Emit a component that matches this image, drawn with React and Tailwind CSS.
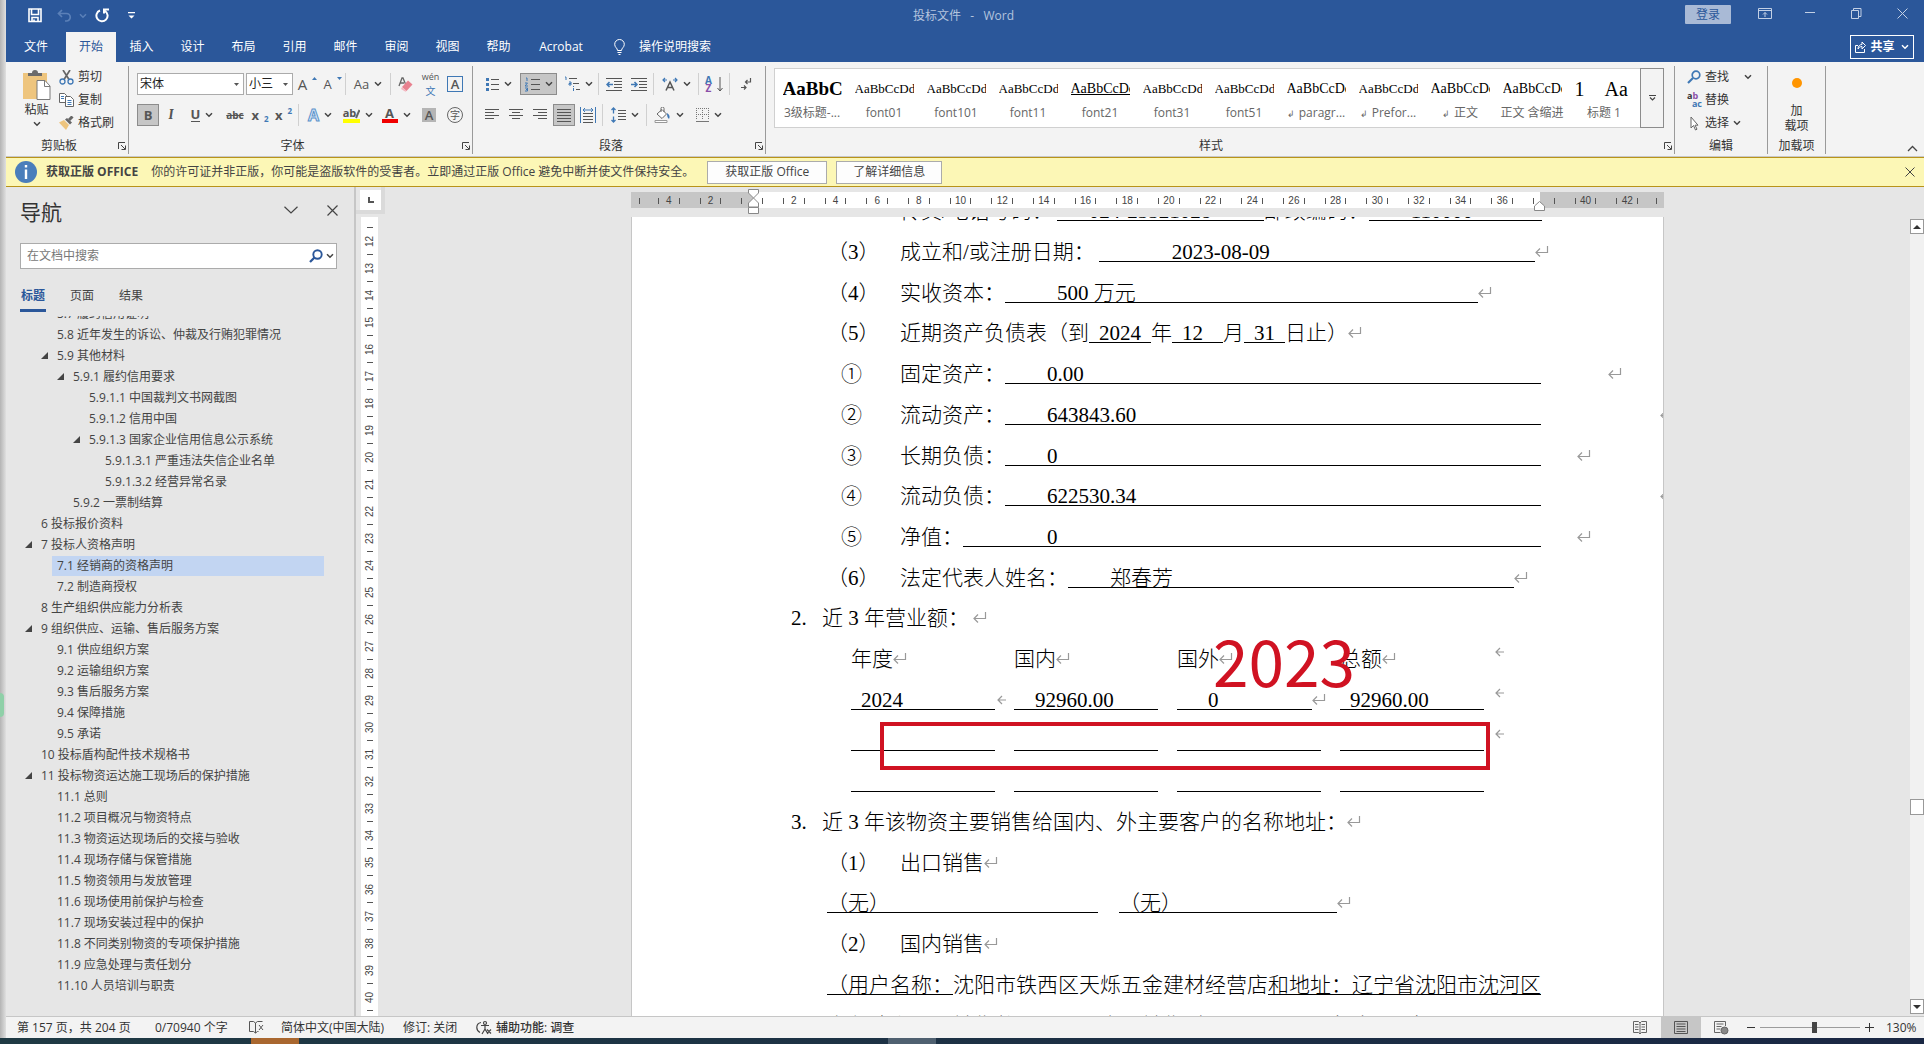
import { clsx } from "clsx";

const styleItems = [
  { preview: "AaBbC", name: "3级标题-...", look: "text-[19px] font-bold" },
  { preview: "AaBbCcDdE", name: "font01", look: "text-[13px]" },
  { preview: "AaBbCcDdE", name: "font101", look: "text-[13px]" },
  { preview: "AaBbCcDdE", name: "font11", look: "text-[13px]" },
  { preview: "AaBbCcDdE", name: "font21", look: "text-[14px] underline" },
  { preview: "AaBbCcDdE", name: "font31", look: "text-[13px]" },
  { preview: "AaBbCcDdE", name: "font51", look: "text-[13px]" },
  { preview: "AaBbCcDdE", name: "paragr...", look: "text-[14px]", para: true },
  { preview: "AaBbCcDdE", name: "Prefor...", look: "text-[13px]", para: true },
  { preview: "AaBbCcDd", name: "正文", look: "text-[14px]", para: true },
  { preview: "AaBbCcDdE", name: "正文 含缩进", look: "text-[14px]" },
  { preview: "1\u00a0\u00a0\u00a0\u00a0Aa", name: "标题 1", look: "text-[20px]" },
];

const tabs = ["插入", "设计", "布局", "引用", "邮件", "审阅", "视图", "帮助"];

const outline = [
  { level: 2, text: "5.7 履约信用证明" },
  { level: 2, text: "5.8 近年发生的诉讼、仲裁及行贿犯罪情况" },
  { level: 2, text: "5.9 其他材料", open: true },
  { level: 3, text: "5.9.1 履约信用要求", open: true },
  { level: 4, text: "5.9.1.1 中国裁判文书网截图" },
  { level: 4, text: "5.9.1.2 信用中国" },
  { level: 4, text: "5.9.1.3 国家企业信用信息公示系统", open: true },
  { level: 5, text: "5.9.1.3.1 严重违法失信企业名单" },
  { level: 5, text: "5.9.1.3.2 经营异常名录" },
  { level: 3, text: "5.9.2 一票制结算" },
  { level: 1, text: "6 投标报价资料" },
  { level: 1, text: "7 投标人资格声明", open: true },
  { level: 2, text: "7.1 经销商的资格声明", current: true },
  { level: 2, text: "7.2 制造商授权" },
  { level: 1, text: "8 生产组织供应能力分析表" },
  { level: 1, text: "9 组织供应、运输、售后服务方案", open: true },
  { level: 2, text: "9.1 供应组织方案" },
  { level: 2, text: "9.2 运输组织方案" },
  { level: 2, text: "9.3 售后服务方案" },
  { level: 2, text: "9.4 保障措施" },
  { level: 2, text: "9.5 承诺" },
  { level: 1, text: "10 投标盾构配件技术规格书" },
  { level: 1, text: "11 投标物资运达施工现场后的保护措施", open: true },
  { level: 2, text: "11.1 总则" },
  { level: 2, text: "11.2 项目概况与物资特点" },
  { level: 2, text: "11.3 物资运达现场后的交接与验收" },
  { level: 2, text: "11.4 现场存储与保管措施" },
  { level: 2, text: "11.5 物资领用与发放管理" },
  { level: 2, text: "11.6 现场使用前保护与检查" },
  { level: 2, text: "11.7 现场安装过程中的保护" },
  { level: 2, text: "11.8 不同类别物资的专项保护措施" },
  { level: 2, text: "11.9 应急处理与责任划分" },
  { level: 2, text: "11.10 人员培训与职责" },
];

const indent = {
  1: "pl-[19px]",
  2: "pl-[35px]",
  3: "pl-[51px]",
  4: "pl-[67px]",
  5: "pl-[83px]",
};

/* ---------- small shared pieces ---------- */

const Chevron = ({ className = "text-[#444]" }) => (
  <svg width="8" height="6" viewBox="0 0 8 6" className={clsx("shrink-0", className)}>
    <path d="M1 1.2 4 4.2 7 1.2" fill="none" stroke="currentColor" strokeWidth="1.5" />
  </svg>
);

const Tool = ({ label, className, active, drop, children }) => (
  <button
    type="button"
    aria-label={label}
    className={clsx(
      "flex h-[22px] shrink-0 items-center justify-center gap-[5px] leading-none text-[#555]",
      active && "border border-[#8c8c8c] bg-[#c6c6c6]",
      className
    )}
  >
    {children}
    {drop && <Chevron />}
  </button>
);

const Sep = () => (
  <span className="flex h-[22px] w-[5px] shrink-0 justify-center">
    <span className="w-px bg-[#d0d0d0]" />
  </span>
);

const Launcher = ({ label }) => (
  <button type="button" aria-label={label} className="absolute right-[2px] bottom-[4px]">
    <svg width="8" height="8" viewBox="0 0 8 8" fill="none" stroke="#444">
      <path d="M.5 7V.5H7M3 3l4 4M7.5 3.5v4h-4" />
    </svg>
  </button>
);

const Group = ({ name, className, launcher, children }) => (
  <section
    aria-label={name}
    className={clsx("relative mt-1 flex h-[88px] flex-col border-r border-[#9a9a9a]", className)}
  >
    {children}
    <p className={clsx("mt-auto h-[16px] text-center leading-[16px] text-[#333]", launcher && "pr-4")}>{name}</p>
    {launcher && <Launcher label={`${name}设置`} />}
  </section>
);

// horizontal bars used by the alignment buttons
const Lines = ({ rows, color = "#555" }) => (
  <svg width="15" height="13" viewBox="0 0 15 13" stroke={color}>
    {rows.map(([from, to], i) => (
      <path key={i} d={`M${from} ${i * 3 + 0.5}H${to}`} />
    ))}
  </svg>
);

/* ---------- title bar and tabs ---------- */

const TitleBar = () => (
  <header className="flex h-[31px] shrink-0 items-center justify-between">
    <div className="flex w-[300px] items-center pl-[22px]">
      <button type="button" aria-label="保存">
        <svg width="14" height="15" viewBox="0 0 14 15" fill="none" stroke="#fff" strokeWidth="1.6">
          <path d="M1 1h12v12.500H1zM3.500 1v5.500h7V1M4 13.500V9.500h6v4M6 11.500v2" />
        </svg>
      </button>
      <button type="button" aria-label="撤消" className="ml-[15px] flex items-center gap-[7px] text-[#5b80b8]">
        <svg width="15" height="13" viewBox="0 0 15 13" fill="none" stroke="currentColor" strokeWidth="1.7">
          <path d="M5 1 1.500 4.500 5 8M2 4.500h7.500a3.500 3.500 0 0 1 0 7.500H8" />
        </svg>
        <Chevron className="text-[#5b80b8]" />
      </button>
      <button type="button" aria-label="恢复" className="ml-[8px]">
        <svg width="15" height="15" viewBox="0 0 15 15" fill="none" stroke="#fff" strokeWidth="2">
          <path d="M5 2.500A5.600 5.600 0 1 0 10 3M9 .500v5M8.500 1.500H14" />
        </svg>
      </button>
      <button type="button" aria-label="自定义快速访问工具栏" className="ml-[18px]">
        <svg width="7" height="7" viewBox="0 0 7 7" fill="#fff">
          <path d="M0 0h7v1.300H0zM.5 3.500h6l-3 3z" />
        </svg>
      </button>
    </div>
    <h1 className="pr-[64px] text-[12px] text-[#b4c4de]">投标文件&nbsp;&nbsp; -&nbsp;&nbsp; Word</h1>
    <div className="flex h-full items-start pt-[5px] text-[#c3d0e5]">
      <button type="button" className="mr-[27px] h-[19px] w-[46px] rounded-[1px] bg-[#a9bad6] text-[12px] leading-[19px] text-[#2b579a]">
        登录
      </button>
      <button type="button" aria-label="功能区显示选项" className="mr-[33px] pt-[3px]">
        <svg width="14" height="11" viewBox="0 0 14 11" fill="none" stroke="currentColor">
          <path d="M.5.5h13v10H.5zM.5 2.500h13M7 9V4.500M5 6.500l2-2 2 2" />
        </svg>
      </button>
      <button type="button" aria-label="最小化" className="mr-[36px] pt-[7px]">
        <svg width="10" height="2" viewBox="0 0 10 2"><path d="M0 .5h10" stroke="currentColor" /></svg>
      </button>
      <button type="button" aria-label="还原" className="mr-[35px] pt-[3px]">
        <svg width="11" height="11" viewBox="0 0 11 11" fill="none" stroke="currentColor">
          <path d="M.5 2.500h7v8h-7zM2.500 2.500v-2h7.500v8H8" />
        </svg>
      </button>
      <button type="button" aria-label="关闭" className="mr-[16px] pt-[3px]">
        <svg width="11" height="11" viewBox="0 0 11 11"><path d="M.5.5l10 10M10.500.5l-10 10" stroke="currentColor" /></svg>
      </button>
    </div>
  </header>
);

const TabBar = () => (
  <nav className="flex h-[31px] shrink-0 items-stretch text-[12px] text-white">
    <button type="button" className="w-[60px]">文件</button>
    <button type="button" className="mt-px w-[50px] bg-[#f3f3f3] text-[#2b579a]">开始</button>
    {tabs.map((t) => (
      <button key={t} type="button" className="w-[51px]">{t}</button>
    ))}
    <button type="button" className="w-[74px]">Acrobat</button>
    <button type="button" className="ml-[16px] flex items-center gap-[14px]">
      <svg width="11" height="16" viewBox="0 0 11 16" fill="none" stroke="#fff">
        <path d="M3.500 11.500C3.500 9 .7 8.500.7 5.300a4.800 4.800 0 0 1 9.600 0c0 3.200-2.800 3.700-2.800 6.200zM3.500 13.500h4M4.500 15.500h2" />
      </svg>
      操作说明搜索
    </button>
    <button type="button" className="mr-[10px] ml-auto flex h-6 w-[64px] items-center justify-center gap-1 self-center border border-white font-bold">
      <svg width="11" height="12" viewBox="0 0 11 12" fill="none" stroke="#fff">
        <path d="M3 4.500H.5v7h9V8M3 8c0-3 2-4.500 4-4.500V1l3.500 3.500L7 8V5.500C5 5.500 4 6.500 3 8z" />
      </svg>
      共享
      <Chevron className="ml-[2px] text-white" />
    </button>
  </nav>
);

/* ---------- ribbon ---------- */

const Clipboard = () => (
  <Group name="剪贴板" launcher className="w-[123px] shrink-0">
    <div className="flex pt-[3px]">
      <button type="button" className="ml-[16px] flex w-[29px] flex-col items-center text-[#333]">
        <svg width="29" height="32" viewBox="0 0 29 32">
          <path d="M1 4h24v26H1z" fill="#eec57e" />
          <path d="M6 7V4h4a3 3 0 0 1 6 0h4v3z" fill="#6b6b6b" />
          <path d="M15 11.500h8l5 5.500v13.500H15z" fill="#fff" stroke="#7a7a7a" />
          <path d="M22.500 12v5.500H28" fill="none" stroke="#7a7a7a" />
        </svg>
        <span className="mt-px leading-4">粘贴</span>
        <Chevron className="mt-[3px] text-[#444]" />
      </button>
      <div className="ml-[8px] flex flex-col gap-[7px] text-[#333]">
        <button type="button" className="flex h-4 items-center gap-[4px]">
          <svg width="15" height="15" viewBox="0 0 15 15" fill="none">
            <path d="M4 0l6 9.500M11 0 5 9.500" stroke="#666" strokeWidth="1.700" />
            <circle cx="3.500" cy="11.500" r="2.500" stroke="#3f78b5" strokeWidth="1.300" />
            <circle cx="11.500" cy="11.500" r="2.500" stroke="#3f78b5" strokeWidth="1.300" />
          </svg>
          剪切
        </button>
        <button type="button" className="flex h-4 items-center gap-[4px]">
          <svg width="15" height="14" viewBox="0 0 15 14" fill="#fff" stroke="#666">
            <path d="M.5.5h5l2 2v7h-7z" />
            <path d="M6.500 3.500h5l3 3v7h-8z" />
            <path d="M8.500 7.500h4M8.500 9.500h4M8.500 11.500h4M2 3.500h3M2 5.500h3" stroke="#3f78b5" />
          </svg>
          复制
        </button>
        <button type="button" className="flex h-4 items-center gap-[4px]">
          <svg width="15" height="14" viewBox="0 0 15 14">
            <path d="M0 6.500 5 4l5 5-3 5z" fill="#eec57e" />
            <path d="M6 3.500 8 2l5 4.500-2 2z" fill="#666" />
            <path d="M10 4l3.500-3.500" stroke="#666" strokeWidth="3" />
          </svg>
          格式刷
        </button>
      </div>
    </div>
  </Group>
);

const Combo = ({ label, value, className }) => (
  <div className={clsx("flex h-[22px] shrink-0 items-center border border-[#ababab] bg-white pr-[4px]", className)}>
    <select aria-label={label} className="min-w-0 flex-1 appearance-none bg-transparent pl-[2px] text-[12px] text-[#222] outline-none">
      <option>{value}</option>
    </select>
    <svg width="5" height="3" viewBox="0 0 5 3" className="shrink-0"><path d="M0 0h5L2.500 3z" fill="#555" /></svg>
  </div>
);

const FontGroup = () => (
  <Group name="字体" launcher className="w-[344px] shrink-0 pt-[7px]">
    <div className="flex pl-[8px]">
      <Combo label="字体" value="宋体" className="mr-[2px] w-[107px]" />
      <Combo label="字号" value="小三" className="w-[47px]" />
      <Tool label="增大字号" className="w-[25px] gap-0 pl-1">
        <span className="text-[15px]">A</span>
        <svg width="5" height="3" viewBox="0 0 5 3" className="mt-1 self-start"><path d="M0 3h5L2.500 0z" fill="#3f78b5" /></svg>
      </Tool>
      <Tool label="减小字号" className="w-[25px] gap-0 pl-1">
        <span className="text-[13px]">A</span>
        <svg width="5" height="3" viewBox="0 0 5 3" className="mt-1 self-start"><path d="M0 0h5L2.500 3z" fill="#3f78b5" /></svg>
      </Tool>
      <Sep />
      <Tool label="更改大小写" className="w-10 text-[13px]" drop>Aa</Tool>
      <Sep />
      <Tool label="清除所有格式" className="w-[25px]">
        <svg width="15" height="15" viewBox="0 0 15 15">
          <path d="M1 9 4 1h1l2.500 6M2 6h4" fill="none" stroke="#666" strokeWidth="1.300" />
          <path d="M4 10 10 3.500l4.500 4L8.500 14z" fill="#e8818f" />
          <path d="M4 10l4.500 4-1 .8L3 12z" fill="#f4b6bf" />
        </svg>
      </Tool>
      <Tool label="拼音指南" className="w-[25px] flex-col gap-0">
        <span className="text-[9px] leading-[8px]">wén</span>
        <span className="text-[10px] leading-[10px] text-[#3f78b5]">文</span>
      </Tool>
      <Tool label="字符边框" className="w-6">
        <span className="h-4 w-4 border border-[#3f78b5] text-[13px] leading-[14px] font-semibold">A</span>
      </Tool>
    </div>
    <div className="mt-[9px] flex pl-[8px]">
      <Tool label="加粗" active className="w-[22px] text-[13px] font-bold">B</Tool>
      <Tool label="倾斜" className="w-6 font-serif text-[14px] font-bold italic">I</Tool>
      <Tool label="下划线" className="w-[38px] text-[13px] font-bold" drop>
        <span className="border-b border-[#555]">U</span>
      </Tool>
      <Tool label="删除线" className="w-7 text-[10px] font-bold line-through">abc</Tool>
      <Tool label="下标" className="w-[22px] gap-0 text-[13px] font-bold">
        x<span className="mt-2 text-[8px] text-[#3f78b5]">2</span>
      </Tool>
      <Tool label="上标" className="w-[25px] gap-0 text-[13px] font-bold">
        x<span className="mb-2 text-[8px] text-[#3f78b5]">2</span>
      </Tool>
      <Sep />
      <Tool label="文本效果" className="w-[38px]" drop>
        <span className="text-[16px] font-bold text-[#d6e6f7] [-webkit-text-stroke:1px_#5c93cb]">A</span>
      </Tool>
      <Tool label="突出显示" className="w-[38px]" drop>
        <span className="border-b-4 border-[#ffff00] text-[11px] leading-[11px] font-bold">
          ab<svg width="5" height="10" viewBox="0 0 5 10" className="-ml-px inline"><path d="M4.500 1 1 9" stroke="#666" strokeWidth="2" /></svg>
        </span>
      </Tool>
      <Tool label="字体颜色" className="w-[38px]" drop>
        <span className="w-4 border-b-4 border-[#f00000] text-[13px] leading-[12px] font-bold">A</span>
      </Tool>
      <Tool label="字符底纹" className="w-7">
        <span className="h-[14px] w-[14px] bg-[#b5b5b5] text-[13px] leading-[14px] font-semibold">A</span>
      </Tool>
      <Tool label="带圈字符" className="w-6">
        <span className="h-4 w-4 rounded-full border border-[#666] text-[10px] leading-[14px]">字</span>
      </Tool>
    </div>
  </Group>
);

const IndentIcon = ({ dir }) => (
  <svg width="16" height="13" viewBox="0 0 16 13" fill="none" stroke="#555">
    <path d="M0 .5h16M8 3.500h8M8 6.500h8M8 9.500h8M0 12.500h16" />
    <path
      d={dir === "out" ? "M7 6.500H1M3.500 4 1 6.500 3.500 9" : "M0 6.500h6M3.500 4 6 6.500 3.500 9"}
      stroke="#3f78b5"
      strokeWidth="1.500"
    />
  </svg>
);

const full = [[0, 14], [0, 14], [0, 14], [0, 14], [0, 14]];

const ParagraphGroup = () => (
  <Group name="段落" launcher className="w-[293px] shrink-0 pt-[7px]">
    <div className="flex pl-[8px]">
      <Tool label="项目符号" className="w-9" drop>
        <svg width="13" height="15" viewBox="0 0 13 15">
          <path d="M5 2.500h8M5 7.500h8M5 12.500h8" stroke="#555" />
          <path d="M0 1h3v3H0zM0 6h3v3H0zM0 11h3v3H0z" fill="#3f78b5" />
        </svg>
      </Tool>
      <Tool label="编号" active className="mx-[3px] w-[37px]" drop>
        <svg width="15" height="15" viewBox="0 0 15 15">
          <path d="M6 2.500h9M6 7.500h9M6 12.500h9" stroke="#555" />
          <path d="M1 1h1v3M0 6h2.500L0 9h3M0 11h2.500v3H0M1 12.500h1" stroke="#3f78b5" fill="none" />
        </svg>
      </Tool>
      <Tool label="多级列表" className="w-9" drop>
        <svg width="16" height="16" viewBox="0 0 16 16">
          <path d="M5 2.500h8M9 7.500h6M12 13.500h4" stroke="#555" />
          <path d="M1 1h1v3M5 6h2v3H5V7.500h2M9.500 12v3M9.500 10v1" stroke="#3f78b5" fill="none" />
        </svg>
      </Tool>
      <Sep />
      <Tool label="减少缩进量" className="w-[25px]"><IndentIcon dir="out" /></Tool>
      <Tool label="增加缩进量" className="w-[25px]"><IndentIcon dir="in" /></Tool>
      <Sep />
      <Tool label="中文版式" className="w-10" drop>
        <svg width="16" height="14" viewBox="0 0 16 14" fill="none">
          <path d="M4 13.500 8 5l4 8.500M5.500 10.500h5" stroke="#555" strokeWidth="1.500" />
          <path d="M1 3h4M3 1 1 3l2 2M15 3h-4M13 1l2 2-2 2" stroke="#3f78b5" strokeWidth="1.200" />
        </svg>
      </Tool>
      <Sep />
      <Tool label="排序" className="w-[26px] gap-[2px]">
        <span className="text-[10px] leading-[8px] font-bold">
          <span className="block text-[#3f78b5]">A</span>
          <span className="block text-[#8a4fa8]">Z</span>
        </span>
        <svg width="6" height="15" viewBox="0 0 6 15" fill="none" stroke="#555"><path d="M3 0v14M.5 11 3 14l2.500-3" /></svg>
      </Tool>
      <Sep />
      <Tool label="显示编辑标记" className="w-7">
        <svg width="11" height="13" viewBox="0 0 11 13" fill="none" stroke="#555">
          <path d="M9.500 0v4H4.500M6.500 2l-2 2 2 2M0 9.500h5M3 7.500l2 2-2 2" strokeWidth="1.200" />
        </svg>
      </Tool>
    </div>
    <div className="mt-[9px] flex pl-[7px]">
      <Tool label="左对齐" className="w-6"><Lines rows={[[0, 14], [0, 9], [0, 14], [0, 9]]} /></Tool>
      <Tool label="居中" className="w-6"><Lines rows={[[0, 14], [3, 11], [0, 14], [3, 11]]} /></Tool>
      <Tool label="右对齐" className="w-6"><Lines rows={[[0, 14], [5, 14], [0, 14], [5, 14]]} /></Tool>
      <Tool label="两端对齐" active className="ml-px w-[22px]"><Lines rows={full} /></Tool>
      <Tool label="分散对齐" className="w-[25px]">
        <svg width="16" height="16" viewBox="0 0 16 16" fill="none" stroke="#555">
          <path d="M3 6.500h10M3 9.500h10M3 12.500h10M3 15.500h10" />
          <path d="M.5 0v16M15.500 0v16M3 3h10M5 1 3 3l2 2M11 1l2 2-2 2" stroke="#3f78b5" />
        </svg>
      </Tool>
      <Sep />
      <Tool label="行距" className="w-[39px]" drop>
        <svg width="15" height="16" viewBox="0 0 15 16" fill="none" stroke="#555">
          <path d="M7 3.500h8M7 6.500h8M7 9.500h8M7 12.500h8" />
          <path d="M2.500 1v5.500M.5 3l2-2 2 2M2.500 9.500V15M.5 13l2 2 2-2" stroke="#3f78b5" strokeWidth="1.300" />
        </svg>
      </Tool>
      <Sep />
      <Tool label="底纹" className="w-10" drop>
        <svg width="17" height="16" viewBox="0 0 17 16" fill="none">
          <path d="M3 7l5-4.500L12.500 7 8 11.500zM7 5V1.500a1.500 1.500 0 0 1 3 0V5" stroke="#666" fill="#fff" />
          <path d="M13 6c3 2 3 4 2 6-1-1-2-2-2-6z" fill="#3f78b5" />
          <path d="M1 13.500h12v2H1z" stroke="#999" fill="#fff" />
        </svg>
      </Tool>
      <Tool label="边框" className="w-10" drop>
        <svg width="13" height="14" viewBox="0 0 13 14" stroke="#777">
          <path d="M0 .5h13M0 6.500h13M.5 0v12M6.500 0v12M12.500 0v12" strokeDasharray="1 1" />
          <path d="M0 13.500h13" />
        </svg>
      </Tool>
    </div>
  </Group>
);

const StylesGroup = () => (
  <Group name="样式" launcher className="min-w-0 flex-1 pr-[10px] pl-[8px]">
    <div className="mt-[2px] flex h-[60px] bg-white">
      <div className="flex min-w-0 flex-1 overflow-hidden border border-r-0 border-[#d0d0d0] pl-[1px]">
        {styleItems.map((s) => (
          <button key={s.name} type="button" className="flex w-[72px] shrink-0 flex-col items-center pt-[7px]">
            <span
              className={clsx(
                "h-[26px] w-[59px] overflow-hidden text-left font-['Liberation_Serif'] leading-[26px] whitespace-nowrap text-black",
                s.look
              )}
            >
              {s.preview}
            </span>
            <span className="mt-[3px] h-4 leading-4 whitespace-nowrap text-[#666]">
              {s.para && <span className="mr-1 text-[9px]">↲</span>}
              {s.name}
            </span>
          </button>
        ))}
      </div>
      <button type="button" aria-label="其他样式" className="flex w-6 shrink-0 items-center justify-center border border-[#8c8c8c] bg-[#f3f3f3]">
        <svg width="7" height="6" viewBox="0 0 7 6" stroke="#444" fill="none"><path d="M0 .5h7M1 2.500 3.500 5 6 2.500" strokeWidth="1.200" /></svg>
      </button>
    </div>
  </Group>
);

const EditGroup = () => (
  <Group name="编辑" className="w-[93px] shrink-0 pt-[3px] text-[#333]">
    <div className="flex flex-col gap-[7px] pl-[12px]">
      <button type="button" className="flex h-4 items-center gap-[4px]">
        <svg width="14" height="14" viewBox="0 0 14 14" fill="none" stroke="#3f78b5" strokeWidth="1.700">
          <circle cx="9" cy="5" r="3.800" /><path d="M6 8 1 13" strokeWidth="2.200" />
        </svg>
        查找
        <Chevron className="ml-[11px] text-[#444]" />
      </button>
      <button type="button" className="flex h-4 items-center gap-[3px]">
        <span className="w-[15px] text-left text-[9px] leading-[8px] font-bold">
          <span className="block">a<span className="text-[#8a4fa8]">b</span></span>
          <span className="block text-right text-[#3f78b5]">ac</span>
        </span>
        替换
      </button>
      <button type="button" className="flex h-4 items-center gap-[4px]">
        <svg width="14" height="15" viewBox="0 0 14 15" fill="#fff" stroke="#666">
          <path d="M4 1v11l2.500-2.500L8.500 14l1.500-.8-2-4h3z" />
        </svg>
        选择
        <Chevron />
      </button>
    </div>
  </Group>
);

const Ribbon = () => (
  <div className="flex h-[95px] shrink-0 overflow-hidden border-b border-[#c8c8c8] bg-[#f3f3f3] text-[12px]">
    <Clipboard />
    <FontGroup />
    <ParagraphGroup />
    <StylesGroup />
    <EditGroup />
    <Group name="加载项" className="w-[58px] shrink-0">
      <button type="button" className="flex flex-col items-center pt-[12px] leading-[15px] text-[#333]">
        <span className="mb-[15px] h-[10px] w-[10px] rounded-full bg-[#ff9500]" />
        <span>加</span>
        <span>载项</span>
      </button>
    </Group>
    <div className="flex w-[98px] shrink-0 items-end justify-end pr-[6px] pb-[4px]">
      <button type="button" aria-label="折叠功能区">
        <svg width="11" height="7" viewBox="0 0 11 7" fill="none" stroke="#444"><path d="M1 6l4.500-4.500L10 6" strokeWidth="1.300" /></svg>
      </button>
    </div>
  </div>
);

const LicenseBar = () => (
  <div role="alert" className="flex h-[30px] shrink-0 items-center border-y border-[#b8931a] bg-[#fcf7b6] pl-[9px] text-[12px] text-[#444]">
    <svg width="22" height="22" viewBox="0 0 22 22">
      <circle cx="11" cy="11" r="11" fill="#4a7ebb" />
      <path d="M9.800 4h2.400v2.500H9.800zM9.800 8.500h2.400V18H9.800z" fill="#fff" />
    </svg>
    <strong className="ml-[9px]">获取正版 OFFICE</strong>
    <span className="ml-[13px] whitespace-nowrap">
      你的许可证并非正版，你可能是盗版软件的受害者。立即通过正版 Office 避免中断并使文件保持安全。
    </span>
    <button type="button" className="ml-[13px] h-[23px] w-[120px] shrink-0 border border-[#ababab] bg-[#fdfdfd]">获取正版 Office</button>
    <button type="button" className="ml-[9px] h-[23px] w-[106px] shrink-0 border border-[#ababab] bg-[#fdfdfd]">了解详细信息</button>
    <button type="button" aria-label="关闭消息" className="mr-[9px] ml-auto">
      <svg width="10" height="10" viewBox="0 0 10 10" stroke="#444"><path d="M.5.5l9 9M9.500.5l-9 9" /></svg>
    </button>
  </div>
);

/* ---------- navigation pane ---------- */

const NavPane = () => (
  <aside className="flex w-[350px] shrink-0 flex-col border-r-2 border-[#c6c6c6] text-[12px] text-[#444]">
    <div className="flex h-[52px] shrink-0 items-center pr-[16px] pl-[14px]">
      <h2 className="text-[21px] text-[#333]">导航</h2>
      <button type="button" aria-label="任务窗格选项" className="mr-[29px] mb-[6px] ml-auto">
        <svg width="14" height="8" viewBox="0 0 14 8" fill="none" stroke="#444"><path d="M.5.8 7 7 13.500.8" strokeWidth="1.200" /></svg>
      </button>
      <button type="button" aria-label="关闭导航" className="mb-[6px]">
        <svg width="11" height="11" viewBox="0 0 11 11" stroke="#444"><path d="M.5.5l10 10M10.500.5l-10 10" strokeWidth="1.200" /></svg>
      </button>
    </div>
    <div className="mt-1 mr-[17px] ml-[14px] flex h-[26px] shrink-0 items-center border border-[#ababab] bg-white pr-[2px]">
      <input
        type="search"
        aria-label="在文档中搜索"
        placeholder="在文档中搜索"
        className="min-w-0 flex-1 bg-transparent pl-[6px] text-[12px] outline-none placeholder:text-[#777]"
      />
      <svg width="14" height="14" viewBox="0 0 14 14" fill="none" stroke="#2b579a" strokeWidth="1.900">
        <circle cx="8.500" cy="5.500" r="4.200" /><path d="M5.500 8.500 1 13" strokeWidth="2.300" />
      </svg>
      <Chevron className="ml-[3px] text-[#444]" />
    </div>
    <div role="tablist" className="mt-[13px] ml-[14px] flex h-[30px] shrink-0 gap-[23px]">
      <button type="button" role="tab" aria-selected="true" className="w-[26px] border-b-[3px] border-[#2b579a] font-bold text-[#2b579a]">标题</button>
      <button type="button" role="tab" className="w-[26px] border-b-[3px] border-transparent">页面</button>
      <button type="button" role="tab" className="w-[26px] border-b-[3px] border-transparent">结果</button>
    </div>
    <div className="mt-1 min-h-0 flex-1 overflow-hidden">
      <ul className="-mt-[13px]">
        {outline.map((item) => (
          <li key={item.text} className={clsx("flex h-[21px] items-center pr-[30px]", indent[item.level])}>
            <span className="w-[11px] shrink-0">
              {item.open && (
                <svg width="7" height="7" viewBox="0 0 7 7"><path d="M7 0v7H0z" fill="#444" /></svg>
              )}
            </span>
            <a href="#doc" className={clsx("h-5 flex-1 pl-[5px] leading-5 whitespace-nowrap", item.current && "bg-[#c2d5f2]")}>
              {item.text}
            </a>
          </li>
        ))}
      </ul>
    </div>
  </aside>
);

/* ---------- rulers ---------- */

const rulerUnits = Array.from({ length: 24 }, (_, i) => i * 2 - 4);
const sideUnits = Array.from({ length: 29 }, (_, i) => i + 12);

const Tick = () => <span className="h-[6px] w-px shrink-0 bg-[#555]" />;

const HorizontalRuler = () => (
  <div className="relative mx-auto mt-[5px] flex h-4 w-[1033px] shrink-0 bg-[#c6c6c6] font-['Liberation_Sans',sans-serif] text-[10px] leading-3 text-[#444]">
    <div className="absolute inset-y-0 right-[124px] left-[122px] bg-white" />
    <div className="relative flex w-full items-center pt-[2px]">
      <span className="flex w-[17px] shrink-0 justify-center"><Tick /></span>
      {rulerUnits.map((n) => (
        <span key={n} className="flex min-w-0 flex-1 items-center justify-between px-[10px]">
          <Tick />
          <span className="w-[18px] text-center">{n === 0 || n === 38 ? "" : Math.abs(n)}</span>
          <Tick />
        </span>
      ))}
      <span className="flex w-4 shrink-0 justify-center"><Tick /></span>
    </div>
    <svg width="11" height="28" viewBox="0 0 11 28" className="absolute -top-[3px] left-[117px]" fill="#fff" stroke="#888">
      <path d="M.5.5h10V4l-5 5-5-5zM.5 18v-4l5-5 5 5v4zM.5 18.500h10v6H.5z" />
    </svg>
    <svg width="11" height="10" viewBox="0 0 11 10" className="absolute top-[9px] right-[119px]" fill="#fff" stroke="#888">
      <path d="M.5 9.500V5l5-4.500 5 4.500v4.500z" />
    </svg>
  </div>
);

const VerticalRuler = () => (
  <div className="flex w-[29px] shrink-0 flex-col overflow-hidden">
    <div className="flex h-[27px] shrink-0 border-r-4 border-b-4 border-[#dadada] pt-[3px] pl-1">
      <button type="button" aria-label="左对齐制表符" className="flex flex-1 items-center justify-center bg-white">
        <svg width="6" height="6" viewBox="0 0 6 6"><path d="M1 0v5h5" fill="none" stroke="#555" strokeWidth="2" /></svg>
      </button>
    </div>
    <div className="mt-[3px] ml-[5px] flex min-h-0 w-[17px] flex-1 flex-col items-center overflow-hidden bg-white pt-[10px] font-['Liberation_Sans',sans-serif] text-[10px] text-[#444]">
      {sideUnits.map((n) => (
        <span key={n} className="flex h-[27px] shrink-0 flex-col items-center">
          <span className="h-px w-[6px] bg-[#555]" />
          <span className="flex flex-1 rotate-180 items-center justify-center leading-[14px] [writing-mode:vertical-rl]">{n}</span>
        </span>
      ))}
      <span className="h-px w-[6px] shrink-0 bg-[#555]" />
    </div>
  </div>
);

/* ---------- document ---------- */

const Mark = ({ className }) => (
  <svg width="14" height="12" viewBox="0 0 14 12" className={clsx("shrink-0", className)} fill="none" stroke="#999" strokeWidth="1.200">
    <path d="M12.500 0v6.500H1.500M5 2.500l-4 4 4 4" />
  </svg>
);

const CellMark = ({ className }) => (
  <svg width="9" height="10" viewBox="0 0 9 10" className={clsx("shrink-0", className)} fill="none" stroke="#999" strokeWidth="1.200">
    <path d="M9 5H1M5 1 1 5l4 4" />
  </svg>
);

const Blank = ({ className, children }) => (
  <span className={clsx("h-5 shrink-0 border-b border-black leading-5 whitespace-pre", className)}>{children}</span>
);

const Line = ({ no, label, children }) => (
  <p className="flex items-center pl-[195px]">
    <span className="w-[73px] shrink-0">{no}</span>
    <span className="shrink-0">{label}</span>
    {children}
  </p>
);

const Circled = ({ children }) => <span className="pl-[14px]">{children}</span>;

const Turnover = () => (
  <table className="row-span-4 ml-[219px] w-[664px] table-fixed border-collapse self-start text-left font-light">
    <thead>
      <tr className="h-[41px]">
        {["年度", "国内", "国外", "总额"].map((h) => (
          <th key={h} scope="col" className="w-[163px] p-0 font-light last-of-type:w-[155px]">
            <span className="flex items-center">{h}<Mark /></span>
          </th>
        ))}
        <td className="p-0"><CellMark className="-mt-3" /></td>
      </tr>
    </thead>
    <tbody>
      <tr className="h-[41px]">
        <td className="p-0"><span className="flex items-center"><Blank className="w-36 pl-[10px]">2024</Blank><CellMark className="ml-[2px]" /></span></td>
        <td className="p-0"><span className="flex"><Blank className="w-36 pl-[21px]">92960.00</Blank></span></td>
        <td className="p-0"><span className="flex items-center"><Blank className="w-[135px] pl-[31px]">0</Blank><Mark /></span></td>
        <td className="p-0"><span className="flex"><Blank className="w-36 pl-[10px]">92960.00</Blank></span></td>
        <td className="p-0"><CellMark className="-mt-3" /></td>
      </tr>
      {[1, 2].map((r) => (
        <tr key={r} className="h-[41px]">
          {[1, 2, 3, 4].map((c) => (
            <td key={c} className="p-0"><span className="flex"><Blank className="w-36" /></span></td>
          ))}
          <td className="p-0">{r === 1 && <CellMark className="-mt-3" />}</td>
        </tr>
      ))}
    </tbody>
  </table>
);

const Page = () => (
  <article
    id="doc"
    className="relative mx-auto mt-[9px] min-h-0 w-[1033px] flex-1 overflow-hidden border-x border-[#c6c6c6] bg-white font-['Liberation_Serif','Noto_Sans_CJK_SC',serif] text-[21px] leading-5 font-light whitespace-nowrap text-black"
  >
    <div className="-mt-[26px] grid h-[855px] grid-cols-1 grid-rows-[repeat(21,minmax(0,1fr))]">
      <Line no="" label="传真/电话号码：">
        <Blank className="ml-1 w-[207px] pl-[32px]">024-23521028</Blank>
        <span>邮政编码：</span>
        <Blank className="w-[173px] pl-[42px]">110000</Blank>
      </Line>
      <Line no="（3）" label="成立和/或注册日期：">
        <Blank className="ml-1 w-[436px] pl-[73px]">2023-08-09</Blank>
        <Mark />
      </Line>
      <Line no="（4）" label="实收资本：">
        <Blank className="w-[473px] pl-[52px]">500 万元</Blank>
        <Mark />
      </Line>
      <Line no="（5）" label="近期资产负债表（到">
        <Blank className="w-[62px] pl-[10px]">2024</Blank>年
        <Blank className="w-[51px] pl-[10px]">12</Blank>月
        <Blank className="w-[41px] pl-[10px]">31</Blank>日止）
        <Mark />
      </Line>
      <Line no={<Circled>①</Circled>} label="固定资产：">
        <Blank className="w-[536px] pl-[42px]">0.00</Blank>
        <Mark className="ml-[67px]" />
      </Line>
      <Line no={<Circled>②</Circled>} label="流动资产：">
        <Blank className="w-[536px] pl-[42px]">643843.60</Blank>
        <Mark className="ml-[119px]" />
      </Line>
      <Line no={<Circled>③</Circled>} label="长期负债：">
        <Blank className="w-[536px] pl-[42px]">0</Blank>
        <Mark className="ml-[36px]" />
      </Line>
      <Line no={<Circled>④</Circled>} label="流动负债：">
        <Blank className="w-[536px] pl-[42px]">622530.34</Blank>
        <Mark className="ml-[119px]" />
      </Line>
      <Line no={<Circled>⑤</Circled>} label="净值：">
        <Blank className="w-[578px] pl-[84px]">0</Blank>
        <Mark className="ml-[36px]" />
      </Line>
      <Line no="（6）" label="法定代表人姓名：">
        <Blank className="w-[446px] pl-[42px]">郑春芳</Blank>
        <Mark />
      </Line>
      <p className="flex items-center pl-[159px]">
        <span className="w-[31px]">2.</span>近 3 年营业额：<Mark className="ml-1" />
      </p>
      <Turnover />
      <p className="flex items-center pl-[159px]">
        <span className="w-[31px]">3.</span>近 3 年该物资主要销售给国内、外主要客户的名称地址：<Mark />
      </p>
      <Line no="（1）" label="出口销售"><Mark /></Line>
      <p className="flex items-center pl-[195px]">
        <Blank className="w-[271px]">（无）</Blank>
        <Blank className="ml-[21px] w-[218px]">（无）</Blank>
        <Mark />
      </p>
      <Line no="（2）" label="国内销售"><Mark /></Line>
      <p className="flex items-center pl-[195px]">
        <Blank>（用户名称：</Blank>
        沈阳市铁西区天烁五金建材经营店
        <Blank>和地址：辽宁省沈阳市沈河区</Blank>
      </p>
      <p className="flex items-center pl-[195px]">
        <span>文化路六号，销售数量：四百套，销售时间：二零二四年十二月）</span>
      </p>
    </div>
    {/* red annotations laid over the table */}
    <div className="absolute top-[505px] left-[248px] h-12 w-[610px] border-4 border-[#d01222]" />
    <span className="absolute top-[410px] left-[581px] font-['Noto_Sans_CJK_SC',sans-serif] text-[64px] leading-[64px] font-normal text-[#d01222]">2023</span>
  </article>
);

const ScrollBar = () => (
  <div className="flex w-[14px] shrink-0 flex-col pt-8 pb-[2px]">
    <button type="button" aria-label="向上滚动" className="flex h-[15px] items-center justify-center border border-[#999] bg-white">
      <svg width="8" height="4" viewBox="0 0 8 4"><path d="M0 4h8L4 0z" fill="#333" /></svg>
    </button>
    <div className="flex flex-1 flex-col bg-[#f1f1f1]">
      <div className="flex-[565]" />
      <div className="h-4 border border-[#999] bg-white" />
      <div className="flex-[184]" />
    </div>
    <button type="button" aria-label="向下滚动" className="flex h-[15px] items-center justify-center border border-[#999] bg-white">
      <svg width="8" height="4" viewBox="0 0 8 4"><path d="M0 0h8L4 4z" fill="#333" /></svg>
    </button>
  </div>
);

/* ---------- status bar ---------- */

const StatusBar = () => (
  <footer className="flex h-[22px] shrink-0 items-center border-t border-[#c6c6c6] bg-[#f3f3f3] pl-[11px] text-[12px] whitespace-nowrap text-[#333]">
    <span className="w-[138px]">第 157 页，共 204 页</span>
    <span className="w-[94px]">0/70940 个字</span>
    <svg width="15" height="13" viewBox="0 0 15 13" fill="none" stroke="#555" className="mr-[17px]">
      <path d="M.5.5h4l2 1.500V12l-2-1.500h-4zM6.500 2l2-1.500h5M6.500 12l2-1.500h1M10 4l4 5M14 4l-4 5" />
    </svg>
    <span className="w-[122px]">简体中文(中国大陆)</span>
    <span className="w-[73px]">修订: 关闭</span>
    <svg width="16" height="15" viewBox="0 0 16 15" fill="none" stroke="#444" strokeWidth="1.200" className="mr-[4px]">
      <circle cx="9" cy="3" r="1.500" />
      <path d="M5 5.500h8M9 5.500V9l3 5M9 9l-3 5M5 2.500C2 3 .8 5 .8 7.500S2 11.500 4 12.500M11 9.500l4 4M15 9.500l-4 4" />
    </svg>
    <span className="font-medium">辅助功能: 调查</span>
    <div className="ml-auto flex h-full items-center">
      <button type="button" aria-label="阅读视图" className="mr-[14px]">
        <svg width="14" height="13" viewBox="0 0 14 13" fill="none" stroke="#666">
          <path d="M.5.5h5L7 2l1.500-1.500h5v11h-5L7 13l-1.500-1.500h-5zM7 2v11M2 3.500h3.500M2 6h3.500M2 8.500h3.500M8.500 3.500H12M8.500 6H12M8.500 8.500H12" />
        </svg>
      </button>
      <button type="button" aria-label="页面视图" className="flex h-full w-10 items-center justify-center bg-[#c6c6c6]">
        <svg width="14" height="13" viewBox="0 0 14 13" fill="none" stroke="#555">
          <path d="M.5.5h13v12H.5zM2.500 3h9M2.500 5.500h9M2.500 8h9M2.500 10.500h9" />
        </svg>
      </button>
      <button type="button" aria-label="Web 版式视图" className="ml-[13px]">
        <svg width="15" height="14" viewBox="0 0 15 14" fill="none" stroke="#666">
          <path d="M11.500 5V.5H.5v11h6M2.500 3h7M2.500 5.500h5M2.500 8h4" />
          <circle cx="10.500" cy="9.500" r="3.500" fill="#888" />
        </svg>
      </button>
      <button type="button" aria-label="缩小" className="mr-[5px] ml-[18px]">
        <svg width="8" height="9" viewBox="0 0 8 9"><path d="M0 4.500h8" stroke="#333" /></svg>
      </button>
      <input
        type="range"
        aria-label="缩放"
        min="0"
        max="100"
        defaultValue="55"
        className="h-[13px] w-[100px] appearance-none bg-linear-to-b from-transparent from-45% via-[#444] via-45% to-transparent to-55% [&::-webkit-slider-thumb]:h-[11px] [&::-webkit-slider-thumb]:w-[5px] [&::-webkit-slider-thumb]:appearance-none [&::-webkit-slider-thumb]:bg-[#444]"
      />
      <button type="button" aria-label="放大" className="mr-[12px] ml-[5px]">
        <svg width="9" height="9" viewBox="0 0 9 9"><path d="M0 4.500h9M4.500 0v9" stroke="#333" /></svg>
      </button>
      <span className="w-[38px]">130%</span>
    </div>
  </footer>
);

const App = () => (
  <div className="flex h-screen flex-col overflow-hidden font-['Open_Sans','Noto_Sans_CJK_SC',sans-serif]">
    <div className="flex min-h-0 flex-1">
      <div className="flex w-[6px] shrink-0 flex-col justify-end overflow-hidden bg-linear-to-r from-[#b4b4b4] to-[#e0e0e0]">
        <span className="mb-[321px] h-6 w-1 rounded-r-full bg-[#8fd0a8]" />
      </div>
      <div className="flex min-w-0 flex-1 flex-col bg-[#e6e6e6]">
        <div className="bg-[#2b579a]">
          <TitleBar />
          <TabBar />
        </div>
        <Ribbon />
        <LicenseBar />
        <main className="flex min-h-0 flex-1">
          <NavPane />
          <VerticalRuler />
          <div className="flex min-w-0 flex-1 flex-col overflow-hidden">
            <HorizontalRuler />
            <Page />
          </div>
          <ScrollBar />
        </main>
        <StatusBar />
      </div>
    </div>
    <div className="flex h-[6px] shrink-0 bg-linear-to-r from-[#1f3a44] to-[#1a2744]">
      <span className="ml-[251px] w-12 bg-[#a9672f]" />
      <span className="ml-[589px] w-12 bg-[#4f6070]" />
    </div>
  </div>
);

export default App;
